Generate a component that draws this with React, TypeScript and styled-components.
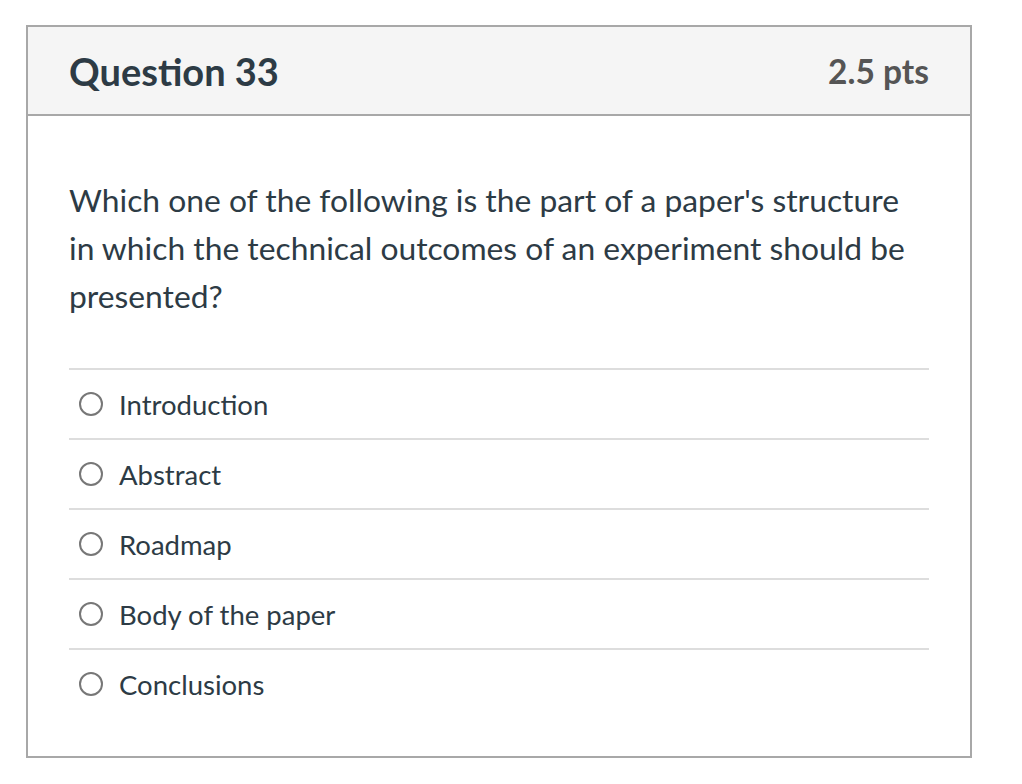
import styled, { createGlobalStyle } from "styled-components";

const GlobalStyle = createGlobalStyle`
  body {
    margin: 0;
    background: #ffffff;
    font-family: Lato, "Noto Sans", sans-serif;
    color: #2d3b45;
  }
`;

const Page = styled.div`
  padding: 25px 0 0 26px;
`;

const Card = styled.div`
  width: 946px;
  box-sizing: border-box;
  border: 2px solid #a8a8a8;
  background: #ffffff;
`;

const Header = styled.div`
  display: flex;
  justify-content: space-between;
  align-items: center;
  height: 87px;
  padding: 0 41px;
  background: #f5f5f5;
  border-bottom: 2px solid #a8a8a8;
`;

const Title = styled.h2`
  margin: 0;
  font-size: 38px;
  font-weight: 700;
  color: #2d3b45;
`;

const Points = styled.div`
  font-size: 33.5px;
  font-weight: 700;
  color: #555555;
`;

const Body = styled.div`
  padding: 60px 41px 38px;
`;

const QuestionText = styled.p`
  margin: 0 0 48px;
  font-size: 31.8px;
  line-height: 48px;
`;

const Answers = styled.div`
  display: flex;
  flex-direction: column;
`;

const AnswerRow = styled.label`
  display: flex;
  align-items: center;
  gap: 16px;
  height: 68px;
  padding: 0 0 0 10px;
  border-top: 2px solid #dddddd;
  font-size: 27.5px;
  cursor: pointer;
`;

const Radio = styled.span`
  width: 20px;
  height: 20px;
  border: 2px solid #777777;
  border-radius: 50%;
  flex: none;
`;

const answers = [
  "Introduction",
  "Abstract",
  "Roadmap",
  "Body of the paper",
  "Conclusions",
];

export default function App() {
  return (
    <Page>
      <GlobalStyle />
      <Card>
        <Header>
          <Title>Question 33</Title>
          <Points>2.5 pts</Points>
        </Header>
        <Body>
          <QuestionText>
            Which one of the following is the part of a paper's structure in
            which the technical outcomes of an experiment should be presented?
          </QuestionText>
          <Answers>
            {answers.map((a) => (
              <AnswerRow key={a}>
                <Radio />
                <span>{a}</span>
              </AnswerRow>
            ))}
          </Answers>
        </Body>
      </Card>
    </Page>
  );
}
